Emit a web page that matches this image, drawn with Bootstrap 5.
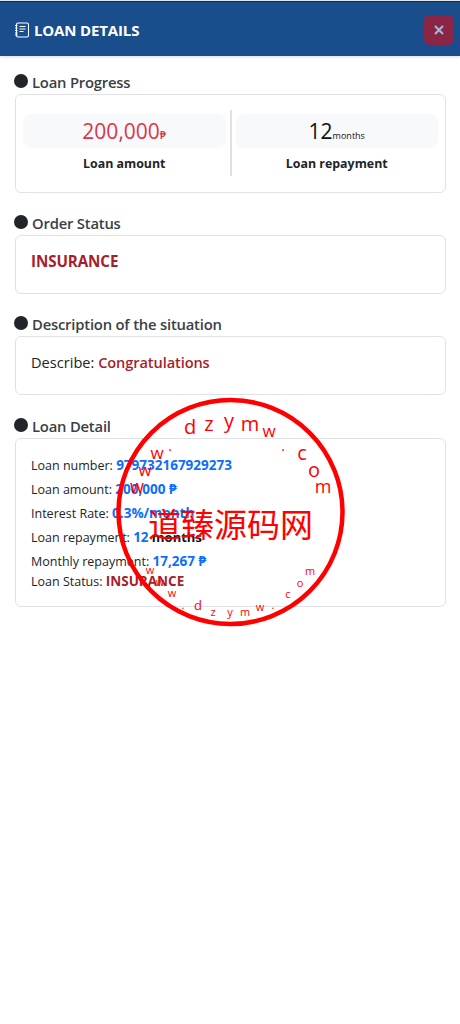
<!DOCTYPE html>
<html lang="en">
<head>
    <meta charset="UTF-8">
    <meta name="viewport" content="width=device-width, initial-scale=1.0">
    <title>Loan Details</title>
    <link rel="stylesheet" href="https://cdn.jsdelivr.net/npm/bootstrap@5.3.0/dist/css/bootstrap.min.css">
    <style>
        body {
            font-family: "Open Sans", "Noto Sans", sans-serif;
            background: #fff;
            color: #212529;
            min-height: 1024px;
            position: relative;
        }
        .top-edge { height: 3px; background: linear-gradient(#e4e6ea 0 1px, #23272e 1px 2px, #1a4d8c 2px); }
        .loan-head {
            background: #1a4d8c;
            height: 53px;
            padding: 0 6px 0 14px;
            box-shadow: 0 1px 3px rgba(0, 0, 0, .15);
        }
        .loan-head h1 { font-size: 15px; font-weight: 700; color: #fff; margin: 0; letter-spacing: -.15px; }
        .close-box {
            width: 30px;
            height: 30px;
            background: #8b2545;
            border: 0;
            border-radius: 6px;
            color: #9fb8d8;
            padding: 0;
        }
        .page-body { padding: 15px 14px 0 14px; }
        .sec-title { font-size: 14.8px; font-weight: 600; line-height: 20px; height: 23px; padding-top: 1px; color: #3a4046; letter-spacing: -.2px; }
        .sec-dot { width: 14px; height: 14px; border-radius: 50%; background: #212529; margin-right: 4px; margin-top: 2px; flex: none; }
        .box-line {
            border: 1px solid #dee2e6;
            border-radius: 6px;
            margin: 0 0 19px 1px;
            background: #fff;
        }
        .box-line.wider-gap { margin-bottom: 20px; }
        .progress-box { height: 99px; padding: 15px 7px 0 7px; }
        .stat-side { flex: 1 1 0; text-align: center; padding-top: 4px; }
        .stat-pill { background: #f8f9fa; border-radius: 8px; height: 34px; font-size: 21px; line-height: 34px; color: #111; }
        .stat-pill small { font-size: 9px; }
        .stat-pill .peso-sign { font-size: 11px; font-weight: 600; }
        .stat-red { color: #dc3545; }
        .stat-label { font-size: 12.4px; font-weight: 700; margin-top: 7px; line-height: 18px; }
        .stat-rule { width: 2px; height: 66px; background: #dee2e6; margin: 0 4px 0 4px; flex: none; }
        .status-box { height: 59px; padding: 14px 15px; font-size: 14.6px; line-height: 22px; font-weight: 500; }
        .status-box b { font-size: 15.2px; }
        .dark-red { color: #a71d2a; }
        .status-box .dark-red { font-weight: 600; letter-spacing: -.1px; }
        .status-box b.dark-red { font-weight: 700; }
        .detail-box { height: 169px; padding: 18px 15px 0 15px; font-size: 12.5px; margin-bottom: 0; }
        .detail-row { line-height: 17px; height: 17px; margin-bottom: 7px; }
        .detail-row.tight { margin-bottom: 3px; }
        .detail-row b { font-weight: 700; font-size: 13.5px; }
        .detail-row .val-blue { color: #0d6efd; }
        .detail-row .plain-bold { font-size: 13px; color: #111; }
        .stamp { position: absolute; left: 110px; top: 392px; width: 240px; height: 240px; pointer-events: none; }
        .stamp text { fill: #f00; font-family: "Open Sans", sans-serif; }
        .stamp .cn { font-family: "Noto Sans CJK SC", sans-serif; font-size: 33px; }
    </style>
</head>
<body>
    <div class="top-edge"></div>
    <div class="loan-head d-flex align-items-center justify-content-between">
        <h1 class="d-flex align-items-center gap-1">
            <svg width="16" height="16" viewBox="0 0 16 16" fill="none" stroke="#fff" stroke-width="1.1">
                <rect x="2.5" y="1" width="12" height="14" rx="1.5"/>
                <path d="M5.5 4.5h6M5.5 7h6M5.5 9.5h4M1 3.5h2.5M1 6h2.5M1 8.5h2.5M1 11h2.5M1 13h2.5"/>
            </svg>
            LOAN DETAILS
        </h1>
        <button class="close-box d-flex align-items-center justify-content-center" aria-label="Close">
            <svg width="10" height="10" viewBox="0 0 10 10" stroke="currentColor" stroke-width="2.2"><path d="M1 1l8 8M9 1l-8 8"/></svg>
        </button>
    </div>

    <div class="page-body">
        <div class="sec-title d-flex"><span class="sec-dot"></span>Loan Progress</div>
        <div class="box-line progress-box d-flex">
            <div class="stat-side">
                <div class="stat-pill stat-red">200,000<small class="peso-sign">₱</small></div>
                <div class="stat-label">Loan amount</div>
            </div>
            <div class="stat-rule"></div>
            <div class="stat-side">
                <div class="stat-pill">12<small>months</small></div>
                <div class="stat-label">Loan repayment</div>
            </div>
        </div>

        <div class="sec-title d-flex"><span class="sec-dot"></span>Order Status</div>
        <div class="box-line status-box"><b class="dark-red">INSURANCE</b></div>

        <div class="sec-title d-flex"><span class="sec-dot"></span>Description of the situation</div>
        <div class="box-line status-box wider-gap">Describe: <span class="dark-red">Congratulations</span></div>

        <div class="sec-title d-flex"><span class="sec-dot"></span>Loan Detail</div>
        <div class="box-line detail-box">
            <div class="detail-row">Loan number: <b class="val-blue">979732167929273</b></div>
            <div class="detail-row">Loan amount: <b class="val-blue">200,000 ₱</b></div>
            <div class="detail-row">Interest Rate: <b class="val-blue">0.3%/month</b></div>
            <div class="detail-row">Loan repayment: <b class="val-blue">12</b> <b class="plain-bold">months</b></div>
            <div class="detail-row tight">Monthly repayment: <b class="val-blue">17,267 ₱</b></div>
            <div class="detail-row">Loan Status: <b class="dark-red">INSURANCE</b></div>
        </div>
    </div>

    <svg class="stamp" viewBox="110 392 240 240">
        <circle cx="230.5" cy="512" r="112" fill="none" stroke="#f00" stroke-width="4.5"/>
        <text class="cn" x="148" y="537">道臻源码网</text>
        <g font-size="20" text-anchor="middle">
            <text x="190" y="434">d</text>
            <text x="209" y="431">z</text>
            <text x="229" y="428">y</text>
            <text x="250" y="431">m</text>
            <text x="269" y="437" font-size="17">w</text>
            <text x="283" y="451" font-size="14">.</text>
            <text x="302" y="460">c</text>
            <text x="314" y="477">o</text>
            <text x="323" y="493" font-size="18">m</text>
            <text x="157" y="459" font-size="17">w</text>
            <text x="170" y="451" font-size="14">.</text>
            <text x="145" y="476" font-size="17">w</text>
            <text x="137" y="493" font-size="18">w</text>
        </g>
        <g font-size="11" text-anchor="middle">
            <text x="150" y="574">w</text>
            <text x="160" y="586">w</text>
            <text x="172" y="597">w</text>
            <text x="183" y="609">.</text>
            <text x="198" y="610" font-size="13">d</text>
            <text x="213" y="616">z</text>
            <text x="230" y="616">y</text>
            <text x="245" y="616">m</text>
            <text x="260" y="611">w</text>
            <text x="273" y="609">.</text>
            <text x="288" y="598">c</text>
            <text x="300" y="587">o</text>
            <text x="310" y="575">m</text>
        </g>
    </svg>

    <script src="https://cdn.jsdelivr.net/npm/bootstrap@5.3.0/dist/js/bootstrap.bundle.min.js"></script>
</body>
</html>
